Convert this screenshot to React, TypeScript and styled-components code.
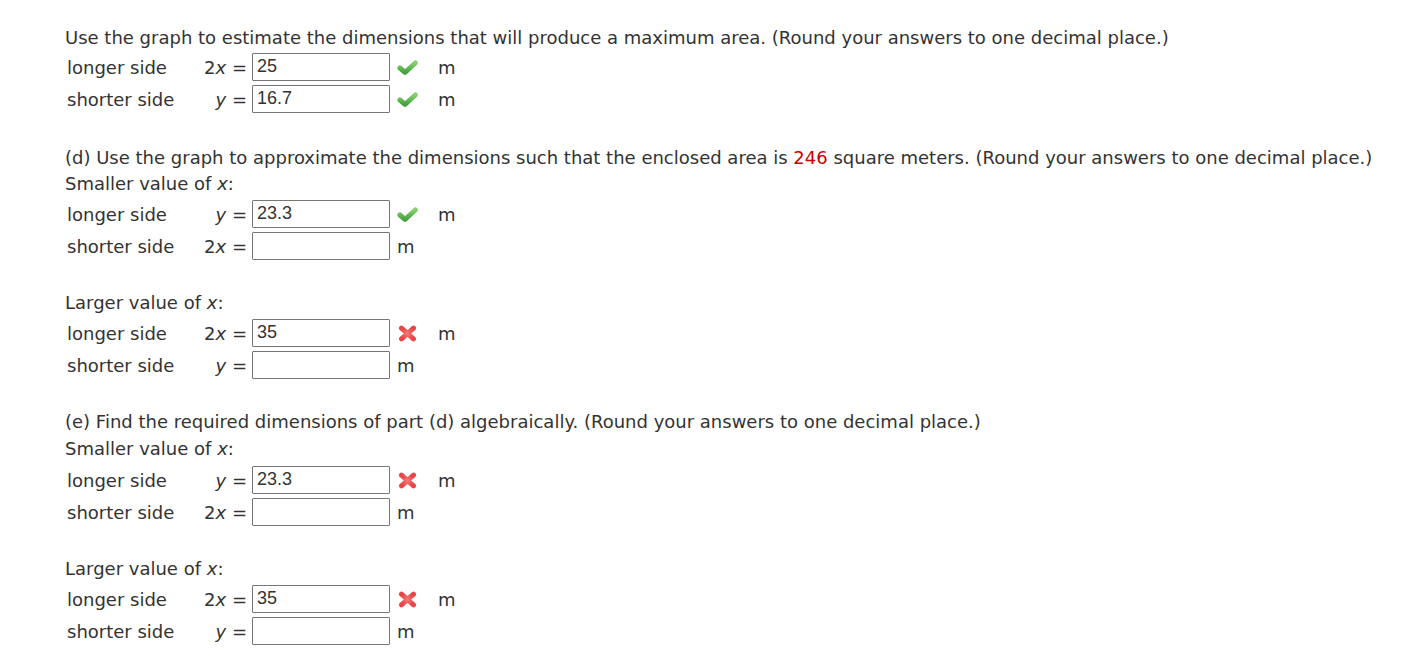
import React from "react";
import styled, { createGlobalStyle } from "styled-components";

const Global = createGlobalStyle`
  html, body { margin: 0; padding: 0; background: #fff; }
  body {
    font-family: "DejaVu Sans", Verdana, sans-serif;
    font-size: 18px;
    color: #333;
  }
`;

const Page = styled.div`
  padding: 27px 0 0 65px;
  display: flex;
  flex-direction: column;
`;

const Line = styled.div<{ $mt?: number }>`
  line-height: 22px;
  height: 20px;
  margin-top: ${(p) => p.$mt ?? 0}px;
  white-space: nowrap;
`;

const Red = styled.span`
  color: #cc0000;
`;

const Var = styled.i`
  font-style: italic;
`;

const Group = styled.div<{ $mt?: number }>`
  display: flex;
  flex-direction: column;
  gap: 4px;
  margin-top: ${(p) => p.$mt ?? 0}px;
`;

const Row = styled.div`
  display: flex;
  align-items: center;
  height: 28px;
`;

const Label = styled.span`
  width: 128px;
  padding-left: 2px;
  box-sizing: border-box;
  white-space: nowrap;
`;

const Eq = styled.span`
  width: 59px;
  text-align: right;
  padding-right: 5px;
  box-sizing: border-box;
  white-space: nowrap;
`;

const Field = styled.input`
  width: 138px;
  height: 28px;
  box-sizing: border-box;
  border: 1px solid #767676;
  border-radius: 1px;
  padding: 0 4px 2px;
  font-family: "Liberation Sans", Arial, sans-serif;
  font-size: 18px;
  color: #333;
  background: #fff;
  outline: none;
`;

const IconSlot = styled.span`
  width: 21px;
  height: 18px;
  margin-left: 7px;
  display: inline-flex;
  align-items: center;
  justify-content: center;
`;

const Unit = styled.span<{ $withIcon: boolean }>`
  margin-left: ${(p) => (p.$withIcon ? 20 : 7)}px;
`;

const Check = () => (
  <svg width="21" height="15" viewBox="0 0 21 15">
    <defs>
      <linearGradient id="cg" x1="0" y1="0" x2="0" y2="1">
        <stop offset="0" stopColor="#86d070" />
        <stop offset="1" stopColor="#45a23f" />
      </linearGradient>
    </defs>
    <path
      d="M3 8 L8 12.3 L18.3 3"
      fill="none"
      stroke="url(#cg)"
      strokeWidth="5"
      strokeLinecap="round"
      strokeLinejoin="round"
    />
  </svg>
);

const Cross = () => (
  <svg width="19" height="17" viewBox="0 0 19 17">
    <defs>
      <radialGradient id="xg" cx="0.5" cy="0.5" r="0.6">
        <stop offset="0" stopColor="#f47a7a" />
        <stop offset="1" stopColor="#e84545" />
      </radialGradient>
    </defs>
    <g stroke="url(#xg)" strokeWidth="5" strokeLinecap="round">
      <line x1="3.5" y1="3.2" x2="15.5" y2="13.8" />
      <line x1="15.5" y1="3.2" x2="3.5" y2="13.8" />
    </g>
  </svg>
);

type Mark = "ok" | "bad" | undefined;

const Answer = ({
  label,
  coef,
  v,
  value,
  mark,
}: {
  label: string;
  coef?: string;
  v: string;
  value: string;
  mark?: Mark;
}) => (
  <Row>
    <Label>{label}</Label>
    <Eq>
      {coef}
      <Var>{v}</Var> =
    </Eq>
    <Field defaultValue={value} />
    {mark && <IconSlot>{mark === "ok" ? <Check /> : <Cross />}</IconSlot>}
    <Unit $withIcon={!!mark}>m</Unit>
  </Row>
);

export default function App() {
  return (
    <>
      <Global />
      <Page>
        <Line>
          Use the graph to estimate the dimensions that will produce a maximum area. (Round your answers to one decimal place.)
        </Line>
        <Group $mt={6}>
          <Answer label="longer side" coef="2" v="x" value="25" mark="ok" />
          <Answer label="shorter side" v="y" value="16.7" mark="ok" />
        </Group>

        <Line $mt={34}>
          (d) Use the graph to approximate the dimensions such that the enclosed area is <Red>246</Red> square meters. (Round your answers to one decimal place.)
        </Line>
        <Line $mt={6}>
          Smaller value of <Var>x</Var>:
        </Line>
        <Group $mt={7}>
          <Answer label="longer side" v="y" value="23.3" mark="ok" />
          <Answer label="shorter side" coef="2" v="x" value="" />
        </Group>
        <Line $mt={32}>
          Larger value of <Var>x</Var>:
        </Line>
        <Group $mt={7}>
          <Answer label="longer side" coef="2" v="x" value="35" mark="bad" />
          <Answer label="shorter side" v="y" value="" />
        </Group>

        <Line $mt={32}>
          (e) Find the required dimensions of part (d) algebraically. (Round your answers to one decimal place.)
        </Line>
        <Line $mt={7}>
          Smaller value of <Var>x</Var>:
        </Line>
        <Group $mt={8}>
          <Answer label="longer side" v="y" value="23.3" mark="bad" />
          <Answer label="shorter side" coef="2" v="x" value="" />
        </Group>
        <Line $mt={32}>
          Larger value of <Var>x</Var>:
        </Line>
        <Group $mt={7}>
          <Answer label="longer side" coef="2" v="x" value="35" mark="bad" />
          <Answer label="shorter side" v="y" value="" />
        </Group>
      </Page>
    </>
  );
}
